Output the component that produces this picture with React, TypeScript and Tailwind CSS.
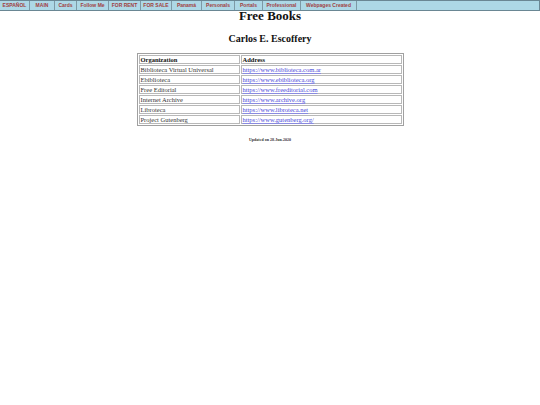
const navItems = [
    { label: "ESPAÑOL", w: "w-[30px]" },
    { label: "MAIN", w: "w-[25px]" },
    { label: "Cards", w: "w-[22px]" },
    { label: "Follow Me", w: "w-[32px]" },
    { label: "FOR RENT", w: "w-[32px]" },
    { label: "FOR SALE", w: "w-[31px]" },
    { label: "Panamá", w: "w-[30px]" },
    { label: "Personals", w: "w-[33px]" },
    { label: "Portals", w: "w-[28px]" },
    { label: "Professional", w: "w-[38px]" },
    { label: "Webpages Created", w: "w-[56px]" },
];

const books = [
    { org: "Biblioteca Virtual Universal", url: "https://www.biblioteca.com.ar" },
    { org: "Ebiblioteca", url: "https://www.ebiblioteca.org" },
    { org: "Free Editorial", url: "https://www.freeditorial.com" },
    { org: "Internet Archive", url: "https://www.archive.org" },
    { org: "Libroteca", url: "https://www.libroteca.net" },
    { org: "Project Gutenberg", url: "https://www.gutenberg.org/" },
];

export default function App() {
    return (
        <div className="w-[540px] h-[405px] bg-white overflow-hidden">
            {/* top nav */}
            <div className="flex h-[11px] bg-[#add8e6] border-t border-b border-[#6a8794] font-['Liberation_Sans',Arial,sans-serif] font-bold text-[5px] text-[#a0403f]">
                {navItems.map((n) => (
                    <div key={n.label} className={`${n.w} shrink-0 flex items-center justify-center border-r border-[#7d99a5] whitespace-nowrap`}>
                        {n.label}
                    </div>
                ))}
                <div className="flex-1 border-r border-[#6a8794]" />
            </div>

            <div className="font-['Liberation_Serif','Times_New_Roman',serif] text-[#111]">
                <h1 className="text-center font-bold text-[13px] leading-[13px] -mt-[2px]">Free Books</h1>
                <h2 className="text-center font-bold text-[10px] leading-[10px] mt-[12px]">Carlos E. Escoffery</h2>

                <div className="flex justify-center mt-[9px]">
                    <table className="w-[267px] border border-[#a0a0a0] border-separate border-spacing-[1px] text-[6.5px] leading-[7px] text-[#333]">
                        <thead>
                            <tr>
                                <th className="w-[101px] text-left font-bold text-[#111] border border-[#b8b8b8] px-[1px] h-[9px] py-0">Organization</th>
                                <th className="text-left font-bold text-[#111] border border-[#b8b8b8] px-[1px] h-[9px] py-0">Address</th>
                            </tr>
                        </thead>
                        <tbody>
                            {books.map((b) => (
                                <tr key={b.org}>
                                    <td className="border border-[#b8b8b8] px-[1px] h-[9px] py-0">{b.org}</td>
                                    <td className="border border-[#b8b8b8] px-[1px] h-[9px] py-0">
                                        <a href={b.url} className="text-[#4646d8] underline decoration-[#8a8ae0]">{b.url}</a>
                                    </td>
                                </tr>
                            ))}
                        </tbody>
                    </table>
                </div>

                <p className="text-center font-bold text-[4px] leading-[4px] mt-[12px] text-[#333]">Updated on 28-Jun-2020</p>
            </div>
        </div>
    );
}
